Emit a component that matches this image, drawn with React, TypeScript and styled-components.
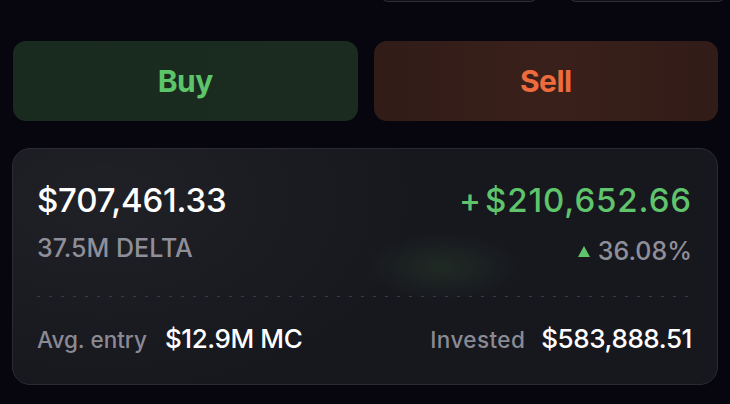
import styled, { createGlobalStyle } from "styled-components";

const GlobalStyle = createGlobalStyle`
  html, body {
    margin: 0;
    padding: 0;
    background: #07060e;
    font-family: Inter, "Noto Sans", sans-serif;
    -webkit-font-smoothing: antialiased;
  }
`;

const Page = styled.div`
  width: 730px;
  height: 404px;
  overflow: hidden;
  padding: 0 12px 0 13px;
  box-sizing: border-box;
  display: flex;
  flex-direction: column;
`;

const TopRow = styled.div`
  display: flex;
  justify-content: flex-end;
  gap: 30px;
  margin-top: -38px;
  margin-right: -8px;
`;

const Chip = styled.div`
  width: 158px;
  height: 40px;
  border-radius: 8px;
  background: #101018;
  border: 1px solid #2c2c35;
  box-sizing: border-box;
`;

const ActionRow = styled.div`
  display: grid;
  grid-template-columns: 1fr 1fr;
  gap: 16px;
  margin-top: 39px;
`;

const ActionButton = styled.button<{ $tone: "buy" | "sell" }>`
  height: 80px;
  border: none;
  border-radius: 13px;
  background: ${(p) =>
    p.$tone === "buy"
      ? "linear-gradient(90deg, #192a1f, #1b2b1f)"
      : "linear-gradient(90deg, #311c18, #3a201a 50%, #321c18)"};
  color: ${(p) => (p.$tone === "buy" ? "#5cc56a" : "#ee6b3d")};
  font-family: Inter, sans-serif;
  font-weight: 700;
  font-size: 30px;
  letter-spacing: -0.6px;
`;

const Card = styled.div`
  position: relative;
  margin-top: 27px;
  margin-left: -1px;
  height: 237px;
  box-sizing: border-box;
  border-radius: 18px;
  border: 1px solid #2b2b33;
  background:
    radial-gradient(ellipse 80px 35px at 430px 118px, rgba(60, 110, 60, 0.22), transparent),
    radial-gradient(ellipse 320px 200px at 90px 50px, rgba(255, 255, 255, 0.04), transparent),
    #17171e;
  padding: 29px 25px 0 24px;
  display: flex;
  flex-direction: column;
`;

const Row = styled.div<{ $gap?: number }>`
  display: flex;
  justify-content: space-between;
  align-items: baseline;
  margin-top: ${(p) => p.$gap ?? 0}px;
`;

const BigValue = styled.div<{ $green?: boolean }>`
  font-size: 33px;
  font-weight: 500;
  letter-spacing: ${(p) => (p.$green ? "0.9px" : "-0.2px")};
  line-height: 44px;
  color: ${(p) => (p.$green ? "#5fc46c" : "#ffffff")};
  display: flex;
  gap: 3px;
`;

const SubValue = styled.div`
  font-size: 25px;
  font-weight: 500;
  letter-spacing: 0;
  line-height: 30px;
  color: #8f8f9a;
  display: flex;
  align-items: center;
  gap: 8px;
`;

const Triangle = styled.span`
  width: 0;
  height: 0;
  border-left: 6px solid transparent;
  border-right: 6px solid transparent;
  border-bottom: 11px solid #5fc46c;
  margin-top: 2px;
`;

const Divider = styled.div`
  margin-top: 30px;
  height: 1px;
  background-image: linear-gradient(90deg, #3a3a45 3px, transparent 3px);
  background-size: 12px 1px;
`;

const Footer = styled.div`
  display: flex;
  justify-content: space-between;
  align-items: baseline;
  margin-top: 26px;
`;

const Stat = styled.div<{ $gap?: number }>`
  display: flex;
  align-items: baseline;
  gap: ${(p) => p.$gap ?? 18}px;
`;

const Label = styled.span<{ $tight?: boolean }>`
  font-size: 22.5px;
  font-weight: 500;
  letter-spacing: ${(p) => (p.$tight ? "0.4px" : "0")};
  color: #8a8a94;
`;

const Value = styled.span`
  font-size: 26px;
  font-weight: 500;
  letter-spacing: -0.4px;
  color: #ffffff;
`;

export default function App() {
  return (
    <>
      <GlobalStyle />
      <Page>
        <TopRow>
          <Chip />
          <Chip />
        </TopRow>
        <ActionRow>
          <ActionButton $tone="buy">Buy</ActionButton>
          <ActionButton $tone="sell">Sell</ActionButton>
        </ActionRow>
        <Card>
          <Row>
            <BigValue>$707,461.33</BigValue>
            <BigValue $green>
              <span>+</span>
              <span>$210,652.66</span>
            </BigValue>
          </Row>
          <Row $gap={11}>
            <SubValue>37.5M DELTA</SubValue>
            <SubValue>
              <Triangle />
              36.08%
            </SubValue>
          </Row>
          <Divider />
          <Footer>
            <Stat>
              <Label>Avg. entry</Label>
              <Value>$12.9M MC</Value>
            </Stat>
            <Stat $gap={16}>
              <Label $tight>Invested</Label>
              <Value>$583,888.51</Value>
            </Stat>
          </Footer>
        </Card>
      </Page>
    </>
  );
}
